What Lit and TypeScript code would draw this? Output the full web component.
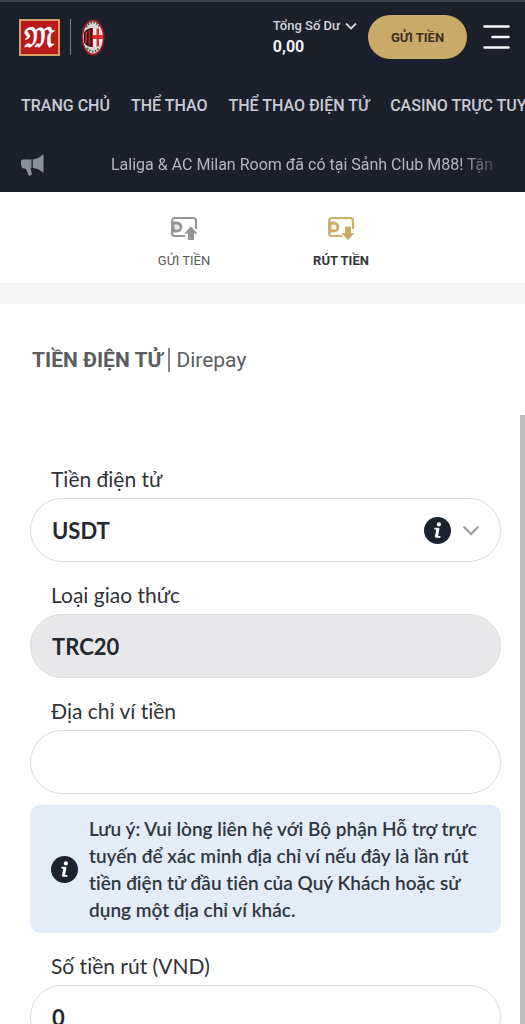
import { LitElement, html, css } from "lit";
import { customElement, state } from "lit/decorators.js";

const NAV = ["TRANG CHỦ", "THỂ THAO", "THỂ THAO ĐIỆN TỬ", "CASINO TRỰC TUYẾN"];

const infoIcon = html`
  <svg class="info" viewBox="0 0 27 27" aria-hidden="true">
    <circle cx="13.5" cy="13.5" r="13.5" fill="#1c2230" />
    <circle cx="14.9" cy="7.4" r="2.1" fill="#fff" />
    <path d="M10.4 11.7h4.3M12.5 19.8h3.9" fill="none" stroke="#fff" stroke-width="1.7" />
    <path d="M14 11.2 12.3 20.4" stroke="#fff" stroke-width="3" />
  </svg>
`;

const walletIcon = (arrow: string) => html`
  <svg class="wallet" viewBox="0 0 28 24" aria-hidden="true">
    <path d="M15 20H4.700a2.500 2.500 0 0 1-2.500-2.500v-13A2.500 2.500 0 0 1 4.700 2h18.300a3 3 0 0 1 3 3v8" fill="none" stroke="currentColor" stroke-width="2.200" />
    <path d="M3 7h4a4 4 0 0 1 0 8H3z" fill="currentColor" fill-opacity=".2" stroke="currentColor" stroke-width="2.800" />
    <path d=${arrow} fill="currentColor" />
  </svg>
`;
const ARROW_UP = "M20.8 10.5 27.500 17.500H24V24h-6v-6.500h-3.800z";
const ARROW_DOWN = "M18 10.500h6V17h3.500l-6.500 7-6.800-7H18z";

@customElement("app-root")
export class AppRoot extends LitElement {
  @state() private wallet = "";
  @state() private amount = "0";

  static styles = css`
    :host {
      display: flex;
      flex-direction: column;
      height: 100vh;
      overflow: hidden;
      background: #fff;
      font-family: Roboto, "Liberation Sans", sans-serif;
    }
    * { box-sizing: border-box; }
    svg { display: block; flex: none; }
    a { color: inherit; text-decoration: none; }
    button { font: inherit; border: 0; padding: 0; background: none; cursor: pointer; }

    header {
      flex: none;
      border-top: 2px solid #3a404c;
      background: #1c202c;
      color: #c9cbd3;
      overflow: hidden;
    }
    .bar {
      display: flex;
      align-items: center;
      height: 70px;
      padding: 0 15px 0 19px;
    }
    .brand { display: flex; align-items: center; gap: 10px; }
    .m88 { width: 41px; height: 37px; }
    .rule { width: 1px; height: 36px; background: #7b808b; }
    .club { width: 24px; height: 37px; }
    .balance {
      margin-left: auto;
      text-align: left;
      color: #d3d5dc;
      font-size: 13px;
      font-weight: 500;
      line-height: 20px;
    }
    .balance .caption { display: flex; align-items: center; gap: 5px; }
    .balance .sum { display: block; font-size: 16px; line-height: 22px; font-weight: 700; color: #f1f2f6; }
    .deposit {
      width: 99px;
      height: 44px;
      margin: 0 16px 0 11px;
      border-radius: 22px;
      background: #cbaa69;
      color: #3b2e22;
      font-size: 13px;
      font-weight: 700;
    }
    .menu { width: 27px; height: 26px; }

    .nav {
      display: flex;
      gap: 21px;
      padding: 22px 0 0 21px;
      white-space: nowrap;
      font-size: 16px;
      font-weight: 500;
      line-height: 24px;
    }
    .ticker { display: flex; align-items: center; height: 74px; padding: 20px 24px 0 21px; }
    .horn { width: 23px; height: 22px; margin-right: 67px; }
    .news {
      flex: 1;
      min-width: 0;
      overflow: hidden;
      white-space: nowrap;
      font-size: 16px;
      line-height: 26px;
      color: #b4b7c1;
      mask-image: linear-gradient(to right, #000 calc(100% - 42px), transparent calc(100% + 4px));
    }

    .tabs {
      flex: none;
      display: flex;
      justify-content: center;
      height: 112px;
      padding-top: 24px;
      border-bottom: 21px solid #f4f4f4;
    }
    .tab {
      width: 157px;
      display: flex;
      flex-direction: column;
      align-items: center;
      gap: 11px;
      font-size: 13px;
      line-height: 20px;
      color: #55585c;
    }
    .tab.active { color: #333539; font-weight: 700; }
    .wallet { width: 28px; height: 24px; color: #929497; }
    .active .wallet { color: #cbac6d; }

    .panel { position: relative; flex: 1; min-height: 0; }
    .scroll {
      height: 100%;
      overflow-y: auto;
      scrollbar-width: none;
      padding: 42px 24px 40px 30px;
    }
    .thumb {
      position: absolute;
      top: 111px;
      right: 0;
      bottom: 0;
      width: 5px;
      background: #bcbcbc;
    }
    h1 {
      display: flex;
      align-items: center;
      gap: 6px;
      margin: 0 0 72px 2px;
      font-size: 21px;
      line-height: 28px;
      font-weight: 700;
      color: #595c60;
    }
    h1 .via { padding-left: 6px; border-left: 2px solid #85878a; line-height: 24px; font-weight: 400; }

    form {
      font-family: Lato, "Liberation Sans", sans-serif;
      font-variant-ligatures: none;
      color: #303338;
    }
    .label {
      display: block;
      padding: 19px 21px 5px;
      font-size: 21px;
      line-height: 28px;
    }
    .field {
      display: block;
      width: 100%;
      height: 64px;
      padding: 0 21px;
      border: 1px solid #dcdcdd;
      border-radius: 32px;
      background: #fff;
      color: #24282f;
      font: 700 22px Lato, "Liberation Sans", sans-serif;
      appearance: none;
      outline: none;
    }
    .field:disabled { background: #e8e8ea; color: #24282f; opacity: 1; }
    .picker { display: grid; align-items: center; }
    .picker > * { grid-area: 1 / 1; }
    .marks {
      justify-self: end;
      display: flex;
      align-items: center;
      gap: 11px;
      padding-right: 21px;
      pointer-events: none;
    }
    .info { width: 27px; height: 27px; }
    .note {
      display: flex;
      align-items: center;
      gap: 11px;
      margin-top: 11px;
      padding: 10px 21px;
      border-radius: 10px;
      background: #e3edf9;
      color: #303640;
      font-size: 19px;
      line-height: 27px;
      font-weight: 600;
    }
    .note p { margin: 0; }
  `;

  render() {
    return html`
      <header>
        <div class="bar">
          <a class="brand" href="#" aria-label="Trang chủ">
            <svg class="m88" viewBox="0 0 41 37">
              <rect width="41" height="37" fill="#d5a068" />
              <rect x="2" y="2" width="37" height="33" fill="#b91a1c" />
              <text x="20.5" y="27" text-anchor="middle" font-family="DejaVu Math TeX Gyre, DejaVu Sans, DejaVu Serif, serif" font-size="25" fill="#fff" stroke="#fff" stroke-width=".8">𝔐</text>
            </svg>
            <span class="rule"></span>
            <svg class="club" viewBox="0 0 24 37">
              <ellipse cx="12" cy="18.500" rx="11.500" ry="18" fill="#9c1f26" />
              <ellipse cx="12" cy="18.500" rx="9.800" ry="16" fill="#dcd8d0" />
              <path d="M5 8Q12-1 19 8M6 29Q12 36 18 29" fill="none" stroke="#55504c" stroke-width="2" stroke-dasharray="1.500 1.500" />
              <path d="M12 9a10 10 0 0 0-9 4.500v10a10 10 0 0 0 9 4.500z" fill="#181314" />
              <path d="M4 12.500h2v12H4zM7.500 10.500h2v16h-2zM10.800 9.500H12v18h-1.200z" fill="#bd2028" />
              <path d="M12 9.500a10 10 0 0 1 9 4v10a10 10 0 0 1-9 4z" fill="#f2eeea" />
              <path d="M15.500 9.500h2.500v6.500h4v4h-4v7.500h-2.500v-7.500H12v-4h3.500z" fill="#d63238" />
            </svg>
          </a>
          <button class="balance">
            <span class="caption">
              Tổng Số Dư
              <svg width="12" height="8" viewBox="0 0 12 8"><path d="m1 1.500 5 5 5-5" fill="none" stroke="#d3d5dc" stroke-width="1.800" /></svg>
            </span>
            <span class="sum">0,00</span>
          </button>
          <button class="deposit">GỬI TIỀN</button>
          <button class="menu" aria-label="Menu">
            <svg width="27" height="26" viewBox="0 0 27 26">
              <path d="M1.500 2.500h24M9.500 13h16M1.500 23.500h24" stroke="#f4f6fa" stroke-width="2.600" stroke-linecap="round" />
            </svg>
          </button>
        </div>
        <nav class="nav">${NAV.map((t) => html`<a href="#">${t}</a>`)}</nav>
        <div class="ticker">
          <svg class="horn" viewBox="0 0 23 22" fill="#8b8f9a">
            <path d="M0 6.500 2 5.500h8.500v8.500H9.500l1.500 6.500-3 1.500L5 15 1 14 0 11z" />
            <path d="M11.800 5.500C16 5 19.500 3 22.500 0v19c-3-3-6.500-4.600-10.700-5z" />
          </svg>
          <div class="news">Laliga &amp; AC Milan Room đã có tại Sảnh Club M88! Tận</div>
        </div>
      </header>

      <nav class="tabs">
        <a class="tab" href="#">${walletIcon(ARROW_UP)}<span>GỬI TIỀN</span></a>
        <a class="tab active" href="#" aria-current="page">${walletIcon(ARROW_DOWN)}<span>RÚT TIỀN</span></a>
      </nav>

      <main class="panel">
        <div class="scroll">
          <h1><span>TIỀN ĐIỆN TỬ</span><span class="via">Direpay</span></h1>
          <form>
            <label class="label" for="coin">Tiền điện tử</label>
            <div class="picker">
              <select class="field" id="coin"><option>USDT</option></select>
              <span class="marks">
                ${infoIcon}
                <svg width="18" height="11" viewBox="0 0 18 11"><path d="m1.500 1.500 7.500 7.500 7.500-7.500" fill="none" stroke="#a3a3a5" stroke-width="2.400" /></svg>
              </span>
            </div>
            <label class="label" for="protocol">Loại giao thức</label>
            <input class="field" id="protocol" value="TRC20" disabled />
            <label class="label" for="wallet">Địa chỉ ví tiền</label>
            <input class="field" id="wallet" .value=${this.wallet}
              @input=${(e: Event) => (this.wallet = (e.target as HTMLInputElement).value)} />
            <div class="note">
              ${infoIcon}
              <p>Lưu ý: Vui lòng liên hệ với Bộ phận Hỗ trợ trực tuyến để xác minh địa chỉ ví nếu đây là lần rút tiền điện tử đầu tiên của Quý Khách hoặc sử dụng một địa chỉ ví khác.</p>
            </div>
            <label class="label" for="amount">Số tiền rút (VND)</label>
            <input class="field" id="amount" inputmode="numeric" .value=${this.amount}
              @input=${(e: Event) => (this.amount = (e.target as HTMLInputElement).value)} />
          </form>
        </div>
        <div class="thumb"></div>
      </main>
    `;
  }
}
